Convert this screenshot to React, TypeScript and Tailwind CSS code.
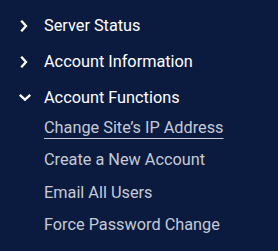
import React from "react";

function ChevronRight() {
  return (
    <svg width="12" height="12" viewBox="0 0 12 12" fill="none" stroke="white" strokeWidth="2.3" strokeLinecap="square">
      <path d="M3 1.6 L7 6 L3 10.4" />
    </svg>
  );
}
function ChevronDown() {
  return (
    <svg width="12" height="12" viewBox="0 0 12 12" fill="none" stroke="white" strokeWidth="2.3" strokeLinecap="square">
      <path d="M1.6 3.6 L6 7.6 L10.4 3.6" />
    </svg>
  );
}

export default function App() {
  const headers = ["Server Status", "Account Information"];
  const subs = ["Change Site\u2019s IP Address", "Create a New Account", "Email All Users", "Force Password Change", "Limit Bandwidth Usage"];
  return (
    <div className="w-[278px] h-[251px] overflow-hidden bg-[#0b1b3f] pt-[8px]" style={{ fontFamily: "Roboto, sans-serif" }}>
      {headers.map((h) => (
        <div key={h} className="flex items-center h-[36px]">
          <div className="w-[44px] flex pl-[19px]"><ChevronRight /></div>
          <span className="text-[16.3px] text-white">{h}</span>
        </div>
      ))}
      <div className="flex items-center h-[36px]">
        <div className="w-[44px] flex pl-[19px]"><ChevronDown /></div>
        <span className="text-[16.3px] text-white">Account Functions</span>
      </div>
      <div className="flex flex-col pl-[44px] mt-[-4px]">
        {subs.map((s, i) => (
          <div key={s} className="h-[32.4px] flex items-center">
            <span className={"text-[16.3px] text-[#c5cad6] whitespace-nowrap " + (i === 0 ? "underline decoration-[#c5cad6] underline-offset-[5px]" : "")}>{s}</span>
          </div>
        ))}
      </div>
    </div>
  );
}
